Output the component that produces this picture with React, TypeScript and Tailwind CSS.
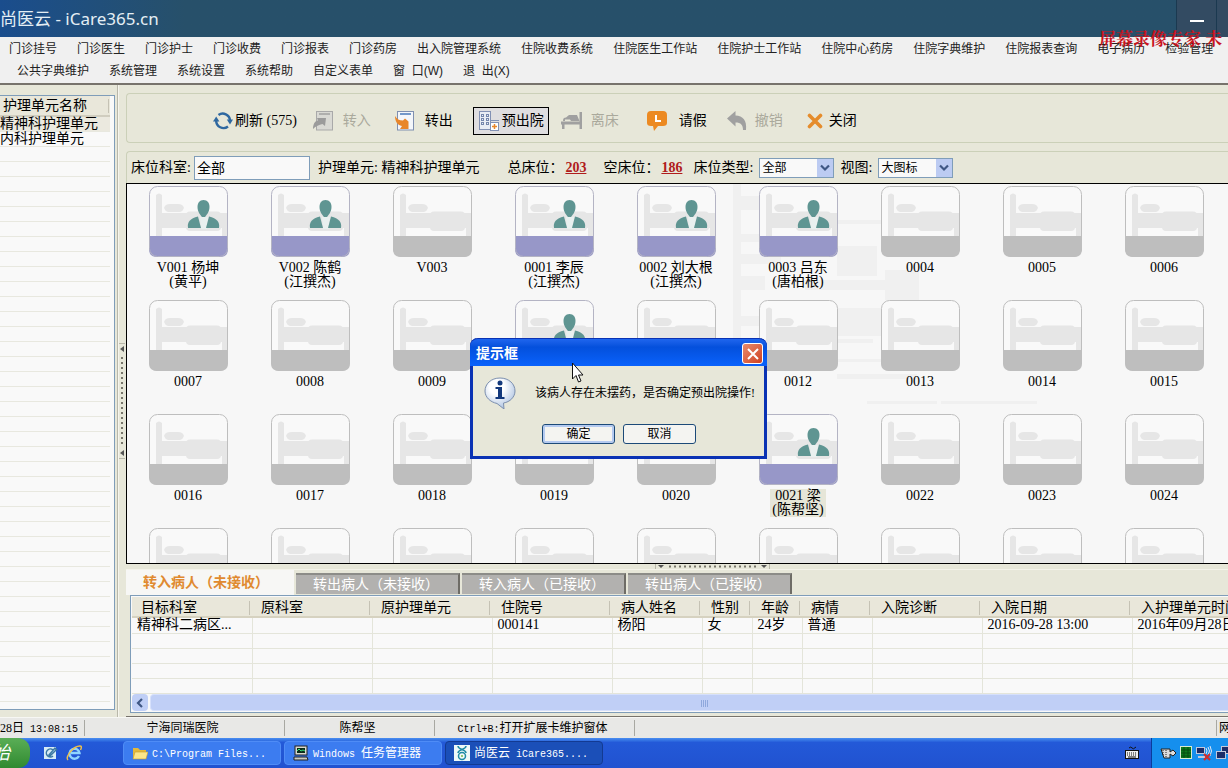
import React from 'react';

interface Bed {
  code: string;
  patient?: string;
  doctor?: string;
  selected?: boolean;
}

interface Column {
  title: string;
  width: string;
  value: string;
}

const menuRows: string[][] = [
  ['门诊挂号', '门诊医生', '门诊护士', '门诊收费', '门诊报表', '门诊药房', '出入院管理系统', '住院收费系统', '住院医生工作站', '住院护士工作站', '住院中心药房', '住院字典维护', '住院报表查询', '电子病历', '检验管理'],
  ['公共字典维护', '系统管理', '系统设置', '系统帮助', '自定义表单', '窗\u00a0 口(W)', '退\u00a0 出(X)'],
];

const units = ['精神科护理单元', '内科护理单元'];

const patients: Record<string, Omit<Bed, 'code'>> = {
  V001: { patient: '杨坤', doctor: '黄平' },
  V002: { patient: '陈鹤', doctor: '江撰杰' },
  '0001': { patient: '李辰', doctor: '江撰杰' },
  '0002': { patient: '刘大根', doctor: '江撰杰' },
  '0003': { patient: '吕东', doctor: '唐柏根' },
  '0010': { patient: '', doctor: '' },
  '0021': { patient: '梁', doctor: '陈帮坚', selected: true },
};

// the last nine beds have no number yet
const bedCodes = [
  'V001', 'V002', 'V003',
  ...Array.from({ length: 24 }, (_, i) => String(i + 1).padStart(4, '0')),
  ...Array.from({ length: 9 }, () => ''),
];

const beds: Bed[] = bedCodes.map((code) => ({ code, ...patients[code] }));

const columns: Column[] = [
  { title: '目标科室', width: 'w-[120px]', value: '精神科二病区...' },
  { title: '原科室', width: 'w-[120px]', value: '' },
  { title: '原护理单元', width: 'w-[120px]', value: '' },
  { title: '住院号', width: 'w-[120px]', value: '000141' },
  { title: '病人姓名', width: 'w-[90px]', value: '杨阳' },
  { title: '性别', width: 'w-[50px]', value: '女' },
  { title: '年龄', width: 'w-[50px]', value: '24岁' },
  { title: '病情', width: 'w-[70px]', value: '普通' },
  { title: '入院诊断', width: 'w-[110px]', value: '' },
  { title: '入院日期', width: 'w-[150px]', value: '2016-09-28 13:00' },
  { title: '入护理单元时间', width: 'w-[150px]', value: '2016年09月28日' },
];

const tabs = ['转出病人（未接收）', '转入病人（已接收）', '转出病人（已接收）'];

/* ---------- icons ---------- */

const RefreshIcon = () => (
  <svg className="h-5 w-5" viewBox="0 0 20 20" fill="none" stroke="#2f68a0" strokeWidth="2.4">
    <path d="M5.500 4A7.300 7.300 0 0 1 17 9.500" />
    <path d="M15 15.500A7.300 7.300 0 0 1 3.200 9.500" />
    <path d="M0 10.500h6.400L3.200 5.500z" fill="#2f68a0" stroke="none" />
    <path d="M13.800 8.500h6.200L17 13.500z" fill="#2f68a0" stroke="none" />
  </svg>
);

const TransferInIcon = () => (
  <svg className="h-5 w-5" viewBox="0 0 20 20">
    <rect x="3.5" y="0.5" width="16" height="18.5" fill="#d9d9d4" stroke="#a9a9a9" />
    <path d="M6 3h11" stroke="#a0a0a0" strokeWidth="1.500" />
    <path d="M0 18c0-5 2-8 5-8.500L4 7h9l-1 8-2.500-2C6 14 3 15 0 18z" fill="#9b9b9b" />
  </svg>
);

const TransferOutIcon = () => (
  <svg className="h-5 w-5" viewBox="0 0 20 20">
    <rect x="2.5" y="0.5" width="16" height="18.5" fill="#f4f6fa" stroke="#7f8fb0" />
    <path d="M5 3h11" stroke="#4a78b8" strokeWidth="1.500" />
    <path d="M0 5c2 3 4 4.500 8 4.500l2-2 3.500 3V18H5l2-3C2 14 0 10 0 5z" fill="#e8862a" />
  </svg>
);

const HospitalIcon = () => (
  <svg className="h-5 w-[22px]" viewBox="0 0 22 20">
    <rect x="1.5" y="0.5" width="11" height="18" fill="#e8ecf4" stroke="#8291b4" />
    <path d="M12 9.500h9" stroke="#8291b4" />
    <g fill="none" stroke="#7486ac">
      <rect x="3.5" y="3.5" width="2" height="2" />
      <rect x="8.5" y="3.5" width="2" height="2" />
      <rect x="3.5" y="7.5" width="2" height="2" />
      <rect x="8.5" y="7.5" width="2" height="2" />
      <rect x="3.5" y="11.5" width="2" height="2" />
      <rect x="8.5" y="11.5" width="2" height="2" />
    </g>
    <rect x="12.5" y="11.5" width="8" height="8" fill="#fff" stroke="#8291b4" />
    <path d="M16.500 13v5M14 15.500h5" stroke="#e8862a" strokeWidth="1.500" />
  </svg>
);

const LeaveBedIcon = () => (
  <svg className="h-5 w-[22px]" viewBox="0 0 22 20" fill="#a0a0a0">
    <path d="M18.500 1h2.500v17h-2.500z" />
    <path d="M0 10.500h21v3H0zM1 13h2.500v5H1z" />
    <path d="M2 10c0-3 1-3.500 3-3.500L8 4h8l2.500 6z" />
    <path d="M4 8.500h5l1 1.500H4z" fill="#e7e7d9" />
  </svg>
);

const ClockIcon = () => (
  <svg className="h-5 w-5" viewBox="0 0 20 20">
    <path d="M4 0h12q4 0 4 4v8q0 3-4 3h-5l-4 5-1-5H4q-4 0-4-3V4q0-4 4-4z" fill="#ec8a22" />
    <path d="M9 4v6h5" fill="none" stroke="#fff" strokeWidth="2" />
  </svg>
);

const UndoIcon = () => (
  <svg className="h-5 w-5" viewBox="0 0 20 20" fill="#a0a0a0">
    <path d="M0 7.500L8.500 0v4.500C16 5 20 9 19 19h-3c0-5-2-7.500-7.500-7.500v4z" />
  </svg>
);

const CloseIcon = () => (
  <svg className="h-4 w-4" viewBox="0 0 16 16" stroke="#e58c2c" strokeWidth="3.6" strokeLinecap="round">
    <path d="M2.500 2.500l11 11M13.500 2.500l-11 11" />
  </svg>
);

const Chevron = () => (
  <span className="pointer-events-none absolute top-px right-px flex h-[18px] w-4 items-center justify-center bg-[#bccbf2]">
    <svg className="h-2 w-2.5" viewBox="0 0 10 8" fill="none" stroke="#3f5784" strokeWidth="2.2">
      <path d="M1 1.500l4 4 4-4" />
    </svg>
  </span>
);

const BedPicture = ({ occupied }: { occupied: boolean }) => (
  <svg className="h-[71px] w-[79px] shrink-0" viewBox="0 0 79 71">
    <rect x="0.5" y="0.5" width="78" height="70" rx="8" fill="#f9f9f9" />
    <g fill="#e6e6e6">
      <path d="M7 9q3-3 6 0v41H7z" />
      <rect x="13" y="27" width="65" height="15" />
      <path d="M15 22q1-4 6-4h8q5 0 6 4-1 3-4 4H19q-3-1-4-4z" />
      <rect x="37" y="25.5" width="35" height="19.5" rx="4" />
      <rect x="73" y="27" width="5" height="23" />
    </g>
    <path
      d="M0 50h79v13q0 8-8 8H8q-8 0-8-8z"
      fill={occupied ? '#9797c8' : '#bebebe'}
    />
    {occupied && (
      <>
        <path d="M51 31h8l-1 12h-6z" fill="#e9f0ef" />
        <g fill="#5f9592">
          <path d="M54.500 14c4 0 6 3 6 7 0 5-3 8-4.500 10h-3c-1.500-2-4.500-5-4.500-10 0-4 2-7 6-7z" />
          <path d="M49 30.500l3 11.500H39c-1-6 2-9.500 10-11.500z" />
          <path d="M60 30.500L57 42h13c1-6-2-9.500-10-11.500z" />
        </g>
      </>
    )}
    <rect x="0.5" y="0.5" width="78" height="70" rx="8" fill="none" stroke={occupied ? '#b4b4c4' : '#bebebe'} />
  </svg>
);

const InfoIcon = () => (
  <svg className="h-8 w-8 shrink-0" viewBox="0 0 32 32">
    <defs>
      <radialGradient id="bubble" cx="0.4" cy="0.3" r="0.8">
        <stop offset="0.3" stopColor="#ffffff" />
        <stop offset="1" stopColor="#9fb8dc" />
      </radialGradient>
    </defs>
    <path d="M16 1C7 1 1 7 1 14c0 6 5 11 12 12.500L20 32l-.5-6C26 25 31 20 31 14 31 7 25 1 16 1z" fill="url(#bubble)" stroke="#7c8fae" />
    <circle cx="16" cy="6" r="2.5" fill="#14397c" />
    <path d="M11.500 10H18v10h2.500v2h-9v-2H14v-8h-2.500z" fill="#14397c" />
  </svg>
);

const FolderIcon = () => (
  <svg className="h-4 w-4" viewBox="0 0 16 16">
    <path d="M1 3h5l2 2h6v9H1z" fill="#e3b93c" />
    <path d="M3 7h13l-2 7H1z" fill="#fbe68a" stroke="#c79a2a" strokeWidth="0.6" />
  </svg>
);

const MonitorIcon = () => (
  <svg className="h-4 w-4" viewBox="0 0 16 16">
    <rect x="2" y="1" width="12" height="9" fill="#d8d8d0" stroke="#222" />
    <rect x="4" y="3" width="8" height="5" fill="#0a2a18" />
    <path d="M4 6l2-2 2 2 2-1 2 1" fill="none" stroke="#3be07a" />
    <path d="M1 12h13l1 3H1z" fill="#c8c8c0" stroke="#222" />
  </svg>
);

const CloudAppIcon = () => (
  <svg className="h-4 w-4" viewBox="0 0 16 16" fill="none" stroke="#1d8aa5" strokeWidth="1.5">
    <rect width="16" height="16" fill="#eef8f8" stroke="none" />
    <circle cx="8" cy="11" r="3.5" />
    <path d="M4 1c0 4 8 3 8 7M12 1c0 4-8 3-8 7" />
    <circle cx="8" cy="11" r="1" fill="#74b84a" stroke="none" />
  </svg>
);

// faint backdrop drawing behind the beds
const Backdrop = () => (
  <svg className="absolute top-0 left-[606px] h-[221px] w-[510px]" viewBox="0 0 510 221" fill="#f0f0f0">
    <path d="M0 0h8v170H0zM8 12h60v14H8zM8 50h24v8H8zM8 70h40v10H8zM8 92h24v14H8zM8 132h30v10H8z" />
    <path d="M104 36h54v4h-54zM104 62h40v30h-40zM72 96h80v10H72zM152 86h34v30h-34zM104 124h46v28h-46z" />
    <path d="M100 155h40v4h-40zM104 175h60v3h-60zM104 190h80v5h-80z" />
    <path d="M134 217h70v3h-70zM208 217h96v3h-96z" />
  </svg>
);

/* ---------- page parts ---------- */

const TitleBar = () => (
  <header className="relative flex h-[37px] shrink-0 items-center justify-between bg-linear-to-r from-[#1a4d8d] via-[#27506a] via-15% to-[#27506a]">
    <h1 className="pt-0.5 font-['Noto_Sans','Noto_Sans_CJK_SC',sans-serif] text-[17px] text-[#e4eef4]">尚医云 - iCare365.cn</h1>
    <div className="flex h-full">
      <button aria-label="最小化" className="flex w-[41px] items-center justify-center border-x border-[#1b3950] bg-[#334b62]">
        <span className="mt-1 h-0.5 w-3.5 bg-white" />
      </button>
      <span className="w-[11px] bg-[#334b62]" />
    </div>
    <span className="absolute top-7 right-0 z-10 w-[129px] overflow-hidden font-['Noto_Serif_CJK_SC','Noto_Sans_CJK_SC',sans-serif] text-[17px] leading-5 font-bold whitespace-nowrap text-[#c8141e]">
      屏幕录像专家 未
    </span>
  </header>
);

const MenuBar = () => (
  <nav className="flex h-12 shrink-0 flex-col overflow-hidden border-b-2 border-[#77736c] bg-[#f0f0f0] pt-px font-['Liberation_Sans','Noto_Sans_CJK_SC',sans-serif] text-xs text-[#222]">
    {menuRows.map((row, i) => (
      <div key={i} className={`flex h-[22px] items-center gap-5 whitespace-nowrap ${i === 0 ? 'pl-[9px]' : 'pl-[17px]'}`}>
        {row.map((item) => (
          <button key={item} className="shrink-0">{item}</button>
        ))}
      </div>
    ))}
  </nav>
);

const UnitList = () => (
  <aside className="mt-2.5 mb-[7px] w-[115px] shrink-0 overflow-hidden border-y border-r border-[#7f9db9] bg-[#f9f9f9] pr-1">
    <table className="w-full table-fixed border-collapse leading-[14px] whitespace-nowrap">
      <thead>
        <tr className="h-5 bg-[#e9e7da]">
          <th className="border-b-2 border-[#d0cdbf] p-0 text-left font-normal">
            <span className="mr-px block border-r border-[#c5c2b4] pl-[3px]">护理单元名称</span>
          </th>
        </tr>
      </thead>
      <tbody>
        {units.map((unit, i) => (
          <tr key={unit} className={`h-[15px] ${i === 0 ? 'bg-[#ebe9df]' : ''}`}>
            <td className="border-b border-[#e8e8df] p-0">{unit}</td>
          </tr>
        ))}
        {Array.from({ length: 38 }, (_, i) => (
          <tr key={i} className="h-[15px]">
            <td className="border-b border-[#e8e8df] p-0" />
          </tr>
        ))}
      </tbody>
    </table>
  </aside>
);

const VerticalSplitter = () => (
  <div className="flex w-[11px] shrink-0 items-center justify-end pr-px">
    <div className="h-full w-0.5 border-x border-l-[#b9b8aa] border-r-[#f6f5ee]" />
    <svg className="h-[116px] w-[6px]" viewBox="0 0 6 116">
      <path d="M0 .5h6M0 115.500h6" stroke="#b9b8aa" />
      <path d="M5 3v6L1 6zM5 107v6l-4-3z" fill="#555" />
      <path d="M3 14v88" stroke="#77756a" strokeWidth="2" strokeDasharray="2 3" />
    </svg>
  </div>
);

interface ToolButtonProps {
  icon: React.ReactNode;
  label: string;
  className: string;
  disabled?: boolean;
}

const ToolButton = ({ icon, label, className, disabled }: ToolButtonProps) => (
  <button disabled={disabled} className={`flex h-7 items-center whitespace-nowrap ${disabled ? 'text-[#aaa99c]' : 'text-black'} ${className}`}>
    {icon}
    <span>{label}</span>
  </button>
);

const Toolbar = () => (
  <div className="mt-2 flex h-[50px] shrink-0 items-center rounded-l border border-r-0 border-[#cbd0b8] pt-1.5 pl-[86px]">
    <ToolButton icon={<RefreshIcon />} label="刷新 (575)" className="gap-0.5" />
    <ToolButton icon={<TransferInIcon />} label="转入" disabled className="ml-4 gap-2.5" />
    <ToolButton icon={<TransferOutIcon />} label="转出" className="ml-6 gap-2.5" />
    <ToolButton icon={<HospitalIcon />} label="预出院" className="ml-5 gap-0.5 border border-black bg-[#dfdee0] px-1" />
    <ToolButton icon={<LeaveBedIcon />} label="离床" disabled className="ml-3 gap-2" />
    <ToolButton icon={<ClockIcon />} label="请假" className="ml-7 gap-3" />
    <ToolButton icon={<UndoIcon />} label="撤销" disabled className="ml-5 gap-2" />
    <ToolButton icon={<CloseIcon />} label="关闭" className="ml-6 gap-1.5" />
  </div>
);

const FilterBar = () => (
  <form className="mt-2 flex h-8 shrink-0 items-center rounded-tl border-t border-l border-[#cbd0b8] pl-1 whitespace-nowrap">
    <label htmlFor="dept" className="w-[63px]">床位科室:</label>
    <input id="dept" defaultValue="全部" className="h-6 w-[116px] border border-[#7f9db9] bg-[#f9f9f9] px-0.5 pb-0.5" />
    <span className="ml-2">护理单元: 精神科护理单元</span>
    <span className="ml-7">总床位：</span>
    <a href="#total" className="ml-0.5 w-6 font-bold text-[#b01c1c] underline">203</a>
    <span className="ml-3.5">空床位：</span>
    <a href="#free" className="ml-0.5 w-6 font-bold text-[#b01c1c] underline">186</a>
    <label htmlFor="bedType" className="ml-2 w-[66px]">床位类型:</label>
    <span className="relative">
      <select id="bedType" className="block h-5 w-[75px] appearance-none border border-[#7f9db9] bg-[#f9f9f9] px-0.5 text-xs">
        <option>全部</option>
      </select>
      <Chevron />
    </span>
    <label htmlFor="viewMode" className="ml-1.5 w-[38px]">视图:</label>
    <span className="relative">
      <select id="viewMode" className="block h-5 w-[75px] appearance-none border border-[#7f9db9] bg-[#f9f9f9] px-0.5 text-xs">
        <option>大图标</option>
      </select>
      <Chevron />
    </span>
  </form>
);

const BedGrid = () => (
  <section className="relative min-h-0 flex-1 overflow-hidden border border-r-0 border-black bg-[#f7f7f7] pt-0.5">
    <Backdrop />
    <ul className="relative grid auto-rows-[114px] grid-cols-[repeat(auto-fill,122px)]">
      {beds.map((bed, i) => (
        <li key={i} className="flex flex-col items-center">
          <BedPicture occupied={bed.doctor !== undefined} />
          {bed.code && (
            <p className={`mt-1 px-0.5 text-center leading-[14px] ${bed.selected ? 'bg-[#e6e6d8]' : ''}`}>
              {bed.code} {bed.patient}
              {bed.doctor && (
                <>
                  <br />({bed.doctor})
                </>
              )}
            </p>
          )}
        </li>
      ))}
    </ul>
  </section>
);

const HorizontalSplitter = () => (
  <div className="flex h-1.5 shrink-0 justify-center border-b border-[#f4f3ea]">
    <svg className="ml-[70px] h-[5px] w-[115px]" viewBox="0 0 115 5">
      <path d="M.5 0v5M114.500 0v5" stroke="#b9b8aa" />
      <path d="M3 1h6L6 4zM106 1h6l-3 3z" fill="#555" />
      <path d="M14 2.500h88" stroke="#77756a" strokeWidth="2" strokeDasharray="2 3" />
    </svg>
  </div>
);

const TransferTable = () => (
  <section className="flex shrink-0 flex-col border-b border-[#77736c] pb-[3px]">
    <div role="tablist" className="flex h-[25px] items-end gap-0.5">
      <button role="tab" aria-selected="true" className="h-[25px] w-[168px] bg-[#f7f7f5] pr-2 font-bold text-[#e08a30]">
        转入病人（未接收）
      </button>
      {tabs.map((tab) => (
        <button key={tab} role="tab" aria-selected="false" className="mb-px h-[21px] w-[164px] border-t-2 border-r-2 border-t-[#8c8c88] border-r-[#6e6c66] bg-[#b2b1af] pr-0.5 leading-[18px] text-white">
          {tab}
        </button>
      ))}
    </div>
    <div className="ml-1 overflow-hidden border border-r-0 border-[#7f9db9] bg-[#f9f9f9] p-px pr-0">
      <div className="h-[97px] overflow-hidden">
        <table className="w-[1150px] table-fixed border-collapse leading-[14px] whitespace-nowrap">
          <thead>
            <tr className="h-5 bg-[#e9e7da]">
              {columns.map((col) => (
                <th key={col.title} className={`border-b-2 border-[#d6d2c0] p-0 pt-0.5 text-left font-normal ${col.width}`}>
                  <span className="mr-0.5 block border-r border-[#c5c2b4] pl-[9px]">{col.title}</span>
                </th>
              ))}
            </tr>
          </thead>
          <tbody>
            <tr className="h-4">
              {columns.map((col) => (
                <td key={col.title} className="border-r border-b border-[#e4e5da] p-0 pl-[5px]">{col.value}</td>
              ))}
            </tr>
            {Array.from({ length: 4 }, (_, i) => (
              <tr key={i} className="h-[15px]">
                {columns.map((col) => (
                  <td key={col.title} className="border-r border-b border-[#e4e5da] p-0" />
                ))}
              </tr>
            ))}
          </tbody>
        </table>
      </div>
      <div className="flex h-[17px] gap-0.5">
        <button aria-label="向左滚动" className="flex w-4 items-center justify-center rounded-sm bg-[#c0cff6]">
          <svg className="h-2.5 w-2" viewBox="0 0 8 10" fill="none" stroke="#3f5784" strokeWidth="2.2">
            <path d="M6 1L2 5l4 4" />
          </svg>
        </button>
        <div className="flex flex-1 items-center justify-center rounded-l-sm border border-r-0 border-[#d6e0fb] bg-[#c0cff6]">
          <svg className="mt-px ml-8 h-[7px] w-[9px]" viewBox="0 0 9 7" stroke="#8fa8dc">
            <path d="M.5 0v7M2.500 0v7M4.500 0v7M6.500 0v7" />
          </svg>
        </div>
      </div>
    </div>
  </section>
);

const StatusBar = () => (
  <footer className="flex h-[21px] shrink-0 items-center overflow-hidden border-t border-[#f7f7f4] bg-[#e8e8e6] text-xs whitespace-nowrap">
    <span className="w-[85px] border-r border-[#a8a8a2] pr-2 text-right">
      28日<span className="ml-1.5 font-['Liberation_Mono',monospace] text-[10px]">13:08:15</span>
    </span>
    <span className="w-[200px] border-r border-[#a8a8a2] pr-1 text-center">宁海同瑞医院</span>
    <span className="w-[150px] border-r border-[#a8a8a2] pr-1 text-center">陈帮坚</span>
    <span className="w-[200px] border-r border-[#a8a8a2] pr-1 text-center">
      <span className="font-['Liberation_Mono',monospace] text-[10px]">Ctrl+B:</span>打开扩展卡维护窗体
    </span>
    <span className="h-4 flex-1 border-r border-[#a8a8a2]" />
    <span className="w-[11px] overflow-hidden pl-0.5">网</span>
  </footer>
);

interface TaskButtonProps {
  icon: React.ReactNode;
  children: React.ReactNode;
  active?: boolean;
}

const TaskButton = ({ icon, children, active }: TaskButtonProps) => (
  <button
    className={`flex h-6 w-[158px] items-center gap-1 rounded-sm border pl-2 whitespace-nowrap ${
      active ? 'border-[#133a92] bg-[#1b4fb8]' : 'border-[#4f8cf6] bg-[#3c7cf0]'
    }`}
  >
    {icon}
    <span>{children}</span>
  </button>
);

const Taskbar = () => (
  <div className="flex h-[30px] shrink-0 items-center overflow-hidden bg-linear-to-b from-[#4a8ef0] via-[#2359d8] via-15% to-[#2152d0] text-xs text-white">
    <button aria-label="开始" className="flex h-full w-[30px] items-center justify-end overflow-hidden rounded-r-xl bg-linear-to-b from-[#5aae56] to-[#2f8a30] pr-5 text-lg italic">
      始
    </button>
    <div className="flex w-[93px] gap-2 pl-3">
      <button aria-label="显示桌面">
        <svg className="h-4 w-4" viewBox="0 0 16 16">
          <path d="M2 2h12v12H2z" fill="#d8ecf6" />
          <path d="M11 5a4 4 0 1 0 0 6M7 10l6-7 1.500 1.500L8 11z" fill="none" stroke="#3b78a4" strokeWidth="1.5" />
        </svg>
      </button>
      <button aria-label="Internet Explorer">
        <svg className="h-4 w-4" viewBox="0 0 16 16" fill="none">
          <path d="M13 11A5 5 0 1 1 13.500 8H5" stroke="#8fd4ff" strokeWidth="2.4" />
          <path d="M2 15C-1 12 7 1 14 1c2 0 1.500 2 .5 4" stroke="#f0c04a" strokeWidth="1.4" />
        </svg>
      </button>
    </div>
    <div className="flex flex-1 gap-[3px]">
      <TaskButton icon={<FolderIcon />}>
        <span className="font-['Liberation_Mono',monospace] text-[10px]">C:\Program Files...</span>
      </TaskButton>
      <TaskButton icon={<MonitorIcon />}>
        <span className="font-['Liberation_Mono',monospace] text-[10px]">Windows </span>任务管理器
      </TaskButton>
      <TaskButton icon={<CloudAppIcon />} active>
        尚医云<span className="font-['Liberation_Mono',monospace] text-[10px]"> iCare365....</span>
      </TaskButton>
    </div>
    <button aria-label="输入法" className="mr-3">
      <svg className="h-4 w-3.5" viewBox="0 0 14 16">
        <path d="M4 3q2-2 3 0t4-1" fill="none" stroke="#111" />
        <rect x="0.5" y="5.5" width="13" height="8" fill="#eee" stroke="#111" />
        <path d="M2 8h10M2 10h10" stroke="#111" strokeDasharray="1 1" />
        <path d="M3 12h8" stroke="#111" />
      </svg>
    </button>
    <div className="flex h-full w-[77px] shrink-0 items-center gap-1 overflow-hidden border-l border-[#0a3c9c] bg-[#158fee] pl-2">
      <svg className="h-4 w-4 shrink-0" viewBox="0 0 16 16">
        <path d="M1 4h9v3l3-2 3 3-3 3-3-2v4H4z" fill="#ddd" stroke="#222" />
        <path d="M3 5v6M6 5v7" stroke="#222" strokeDasharray="1 1" />
      </svg>
      <svg className="h-3.5 w-3 shrink-0" viewBox="0 0 12 14">
        <rect x="0.5" y="0.5" width="11" height="12" fill="#0c7a1c" stroke="#d9ead0" />
        <path d="M1 4h10M1 7h10M1 10h10M4 1v11M8 1v11" stroke="#064a10" />
      </svg>
      <svg className="h-4 w-4 shrink-0" viewBox="0 0 16 16">
        <rect x="0.5" y="2.5" width="8" height="6" fill="#1b2c68" stroke="#c0c8dc" />
        <path d="M2 11h7v2H2z" fill="#c0c8dc" />
        <path d="M10 3q2 3 0 6M12 2q3 4 0 8M14 1q3 5 0 10" fill="none" stroke="#e2e8f4" />
        <path d="M8 9l6 6M14 9l-6 6" stroke="#d42a2a" strokeWidth="2" />
      </svg>
      <svg className="h-4 w-4 shrink-0" viewBox="0 0 16 16" fill="#1b2c68" stroke="#c0c8dc">
        <rect x="5.5" y="1.5" width="9" height="7" />
        <rect x="0.5" y="6.5" width="9" height="7" />
      </svg>
    </div>
  </div>
);

const ConfirmDialog = () => (
  <div
    role="dialog"
    aria-labelledby="dialog-title"
    className="absolute top-[338px] left-[470px] z-20 w-[297px] rounded-t-lg border-3 border-t-0 border-[#0a32b4] bg-[#e7e7d9]"
  >
    <div className="-mx-[3px] flex h-7 items-center justify-between rounded-t-lg border-t border-[#0a32b4] bg-linear-to-b from-[#1f66ee] via-[#0450dc] via-30% to-[#0a62fc] pt-0.5 pr-1 pl-1.5">
      <h2 id="dialog-title" className="text-sm font-bold text-white">提示框</h2>
      <button aria-label="关闭" className="flex h-[21px] w-[21px] items-center justify-center rounded-[3px] border border-white bg-linear-to-br from-[#e78a6c] to-[#cf3e1c]">
        <svg className="h-3 w-3" viewBox="0 0 12 12" stroke="#fff" strokeWidth="2">
          <path d="M1 1l10 10M11 1L1 11" />
        </svg>
      </button>
    </div>
    <div className="flex items-center gap-[19px] pt-[11px] pl-[11px]">
      <InfoIcon />
      <p className="text-xs whitespace-nowrap">该病人存在未摆药，是否确定预出院操作!</p>
    </div>
    <div className="flex gap-2 pt-[15px] pb-3 pl-[69px] text-xs">
      <button className="h-5 w-[73px] rounded-[3px] border border-[#1c4a78] bg-[#f4f4f1] shadow-[inset_0_0_0_2px_#b4caf0]">确定</button>
      <button className="h-5 w-[73px] rounded-[3px] border border-[#1c4a78] bg-[#f4f4f1]">取消</button>
    </div>
  </div>
);

const App: React.FC = () => {
  return (
    <div className="relative flex h-screen flex-col overflow-hidden bg-[#e7e7d9] font-['Liberation_Serif','Noto_Sans_CJK_SC',sans-serif] text-sm text-black">
      <TitleBar />
      <MenuBar />
      <div className="flex min-h-0 flex-1">
        <UnitList />
        <VerticalSplitter />
        <main className="flex min-w-0 flex-1 flex-col">
          <Toolbar />
          <FilterBar />
          <BedGrid />
          <HorizontalSplitter />
          <TransferTable />
        </main>
      </div>
      <StatusBar />
      <Taskbar />
      <ConfirmDialog />
      {/* mouse pointer */}
      <svg className="pointer-events-none absolute top-[362px] left-[572px] z-30 h-[21px] w-3" viewBox="0 0 12 21">
        <path d="M.5 1v16l3.500-3.500L6.500 20l2.500-1-2.500-6H11z" fill="#fff" stroke="#111" />
      </svg>
    </div>
  );
};

export default App;
